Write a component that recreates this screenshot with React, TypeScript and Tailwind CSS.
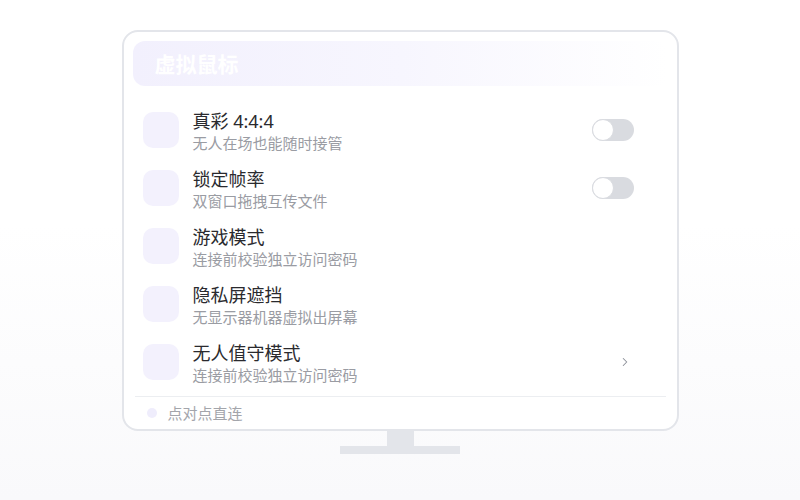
import { ChevronRight } from "lucide-react";

const rows = [
  { title: "真彩 4:4:4", sub: "无人在场也能随时接管", action: "toggle" },
  { title: "锁定帧率", sub: "双窗口拖拽互传文件", action: "toggle" },
  { title: "游戏模式", sub: "连接前校验独立访问密码", action: "" },
  { title: "隐私屏遮挡", sub: "无显示器机器虚拟出屏幕", action: "" },
  { title: "无人值守模式", sub: "连接前校验独立访问密码", action: "chevron" },
];

function Toggle() {
  return (
    <div className="relative h-[22px] w-[42px] rounded-full bg-[#d9dbe0]">
      <div className="absolute left-0 top-0 h-[22px] w-[22px] rounded-full border border-[#d9dbe0] bg-white" />
    </div>
  );
}

export default function App() {
  return (
    <div
      className="flex h-[500px] w-[800px] flex-col items-center bg-gradient-to-b from-white from-45% to-[#f9f9fb] pt-[30px]"
      style={{ fontFamily: '"Noto Sans", "Noto Sans CJK SC", sans-serif' }}
    >
      <div className="h-[401px] w-[557px] rounded-[16px] border-2 border-[#e3e5ea] bg-white px-[9px] pt-[9px]">
        <div className="flex h-[45px] items-center rounded-[12px] bg-gradient-to-r from-[#f2f0fd] via-[#f7f6fe] to-transparent pl-[22px]">
          <span className="pt-[2px] text-[21px] font-bold text-white">虚拟鼠标</span>
        </div>

        <div className="mt-[15px]">
          {rows.map((r) => (
            <div key={r.title} className="flex h-[58px] items-center pl-[10px] pr-[34px]">
              <div className="h-[36px] w-[36px] rounded-[10px] bg-[#f3f1fd]" />
              <div className="ml-[14px] flex flex-1 flex-col pt-[2px]">
                <span className="text-[18px] leading-[23px] text-[#2a2a2e]">{r.title}</span>
                <span className="text-[15px] leading-[20px] text-[#9a9ca3]">{r.sub}</span>
              </div>
              {r.action === "toggle" && <Toggle />}
              {r.action === "chevron" && (
                <ChevronRight className="mr-[2px] h-[14px] w-[14px] text-[#8b8f98]" strokeWidth={1.8} />
              )}
            </div>
          ))}
        </div>

        <div className="mx-[2px] mt-[5px] flex h-[32px] items-center border-t border-[#eceef1] pl-[12px]">
          <div className="h-[10px] w-[10px] rounded-full bg-[#efedfc]" />
          <span className="ml-[11px] pt-[1px] text-[15px] text-[#a3a5ab]">点对点直连</span>
        </div>
      </div>
      <div className="h-[15px] w-[27px] bg-[#e3e5ea]" />
      <div className="h-[8px] w-[120px] bg-[#e3e5ea]" />
    </div>
  );
}
